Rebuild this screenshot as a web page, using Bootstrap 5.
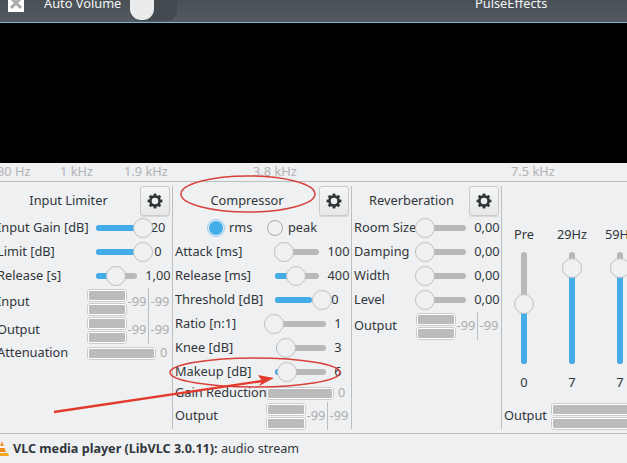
<!DOCTYPE html>
<html lang="en">
<head>
<meta charset="utf-8">
<title>PulseEffects</title>
<link href="https://cdn.jsdelivr.net/npm/bootstrap@5.3.0/dist/css/bootstrap.min.css" rel="stylesheet">
<style>
html,body{margin:0;background:#000}
body{font-family:"Noto Sans","Open Sans",sans-serif;font-size:12.8px;line-height:1.2;color:#31363b}
.app-shell{width:627px;height:463px;position:relative;overflow:hidden;background:#eff0f1}
.top-strip{height:23px;background:linear-gradient(#4a5156,#535b60);border-bottom:1px solid #6fb4d2;color:#f2f4f5;overflow:hidden;flex:none}
.close-box{width:16px;height:18px;margin-left:8px;margin-top:-6px;background:#fff;flex:none}
.auto-lbl{margin-left:20px;margin-top:-4px;width:86px;white-space:nowrap;flex:none}
.sw-track{width:47px;height:21px;margin-top:0;background:#42494f;border-radius:0 0 10px 10px;position:relative;flex:none}
.sw-knob{position:absolute;left:0;top:0;width:24px;height:20px;background:#e9ebed;border-radius:0 0 11px 11px}
.app-name{margin-left:298px;margin-top:-4px;white-space:nowrap}
.video-area{height:140px;background:#000;flex:none}
.freq-strip{height:19px;border-bottom:1px solid #bcbebf;color:#b1b3b5;flex:none;white-space:nowrap}
.fq{flex:none}
.fq1{margin-left:-3px;width:63px}
.fq2{width:64px}
.fq3{width:129px}
.fq4{width:258px}
.panels{height:251px;flex:none}
.pnl{margin-top:4px;height:243px;border-right:1px solid #bcbebf;flex:none}
.pnl-a{width:176px;margin-left:-3px}
.pnl-b{width:179px;padding-left:2px}
.pnl-c{width:150px;padding-left:2px}
.pnl-d{width:126px;flex:none}
.ttl-row{height:30px}
.ttl{flex:1 1 auto;text-align:center}
.gear{width:30px;height:30px;margin-right:2px;padding:0;border:1px solid #c8cacc;border-radius:3px;background:linear-gradient(#f4f5f5,#e6e7e8);box-shadow:0 1px 0 #d8d9da;display:flex;align-items:center;justify-content:center;flex:none}
.rw{height:24px;white-space:nowrap}
.lb{flex:none}
.lb-a{width:99px}
.lb-m{width:90px}
.lb-b{width:100px}
.lb-r{width:90px}
.lb-k{width:101px}
.lb-g{width:91px}
.lb-c{width:62px}
.lb-o{width:62px}
.sldr{position:relative;height:6px;border-radius:3px;background:#b9b9b9;flex:none}
.tr-41{width:41px}
.tr-44{width:44px}
.tr-37{width:37px}
.tr-61{width:61px}
.tr-50{width:50px}
.tr-51{width:51px}
.fill-part{position:absolute;left:0;top:0;bottom:0;width:min(var(--p),100%);background:#44ace6;border-radius:3px}
.knob{position:absolute;left:var(--p);top:50%;width:20px;height:20px;margin:-10px 0 0 -10px;border-radius:50%;background:#eff0f1;border:1px solid #bdbfc0}
.val{flex:1 1 auto;text-align:center;padding-left:7px}
.val-n{padding-left:0;padding-right:1px}
.radio-row{height:24px;padding-left:33px}
.radio-row .form-check-input{width:16px;height:16px;margin:0;border:1px solid #a8aaab;background-color:#eff0f1;background-image:none;box-shadow:none;float:none;flex:none}
.radio-row .form-check-input:checked{background-color:#44ace6;border-color:#eff0f1;box-shadow:0 0 0 1px #9ccfee}
.radio-row label{margin-left:5px;width:38px}
.mtr-row{height:28px;white-space:nowrap}
.mtr-stack{width:40px;flex:none;display:flex;flex-direction:column;gap:1px}
.lvl{height:13px;border:2px solid #fff;outline:1px solid #c9cbcc;outline-offset:-1px;border-radius:3px;background:#bbb;background-clip:padding-box}
.mtr-num{color:#acaeb0;flex:none;width:20px;text-align:center}
.mtr-sep{border-left:1px solid #bcbebf;height:100%;flex:none;margin:0 1px}
.lvl-wide{width:69px;flex:none}
.gr-bar{width:68px;flex:none}
.dim{color:#acaeb0;margin-left:4px}
.rw-att{height:16px;margin-top:1px}
.rw-gr{height:18px;white-space:nowrap}
.rw-out{height:28px;white-space:nowrap}
.chs{margin-left:-2px;padding-top:43px}
.ch{width:48px;flex:none;text-align:center}
.ch-name{height:27px;line-height:18px}
.vtrack{width:6px;height:112px;border-radius:3px;background:#b9b9b9;position:relative;margin:0 auto}
.vfill{position:absolute;left:0;right:0;bottom:0;top:var(--t);background:#44ace6;border-radius:3px}
.vknob{position:absolute;left:50%;top:var(--t);width:20px;height:20px;margin:-10px 0 0 -10px;border-radius:50%;background:#eff0f1;border:1px solid #bdbfc0}
.ch-val{margin-top:11px;height:18px}
.out-row{margin-top:9px;margin-left:2px;height:28px}
.out-lb{width:47px;flex:none}
.mtr-stack.wide-stack{width:90px}
.status-strip{height:30px;padding-top:1px;border-top:1px solid #bcbebf;flex:none;white-space:nowrap;font-size:12.6px}
.cone{flex:none;margin-left:-5px;margin-right:4px}
.anno{position:absolute;left:0;top:0;pointer-events:none}
</style>
</head>
<body>
<svg width="0" height="0" class="position-absolute">
<defs>
<g id="cog">
<circle cx="8" cy="8" r="4.6" fill="none" stroke="#2f3437" stroke-width="2.6"/>
<g fill="#2f3437">
<rect x="6.6" y="0.6" width="2.8" height="3"/>
<rect x="6.6" y="12.4" width="2.8" height="3"/>
<rect x="0.6" y="6.6" width="3" height="2.8"/>
<rect x="12.4" y="6.6" width="3" height="2.8"/>
<rect x="6.6" y="0.6" width="2.8" height="3" transform="rotate(45 8 8)"/>
<rect x="6.6" y="12.4" width="2.8" height="3" transform="rotate(45 8 8)"/>
<rect x="0.6" y="6.6" width="3" height="2.8" transform="rotate(45 8 8)"/>
<rect x="12.4" y="6.6" width="3" height="2.8" transform="rotate(45 8 8)"/>
</g>
</g>
</defs>
</svg>
<div class="app-shell d-flex flex-column">
  <div class="top-strip d-flex align-items-start">
    <div class="close-box d-flex align-items-center justify-content-center">
      <svg width="14" height="14" viewBox="0 0 14 14"><path d="M2 2 12 12M12 2 2 12" stroke="#a9abac" stroke-width="3"/></svg>
    </div>
    <div class="auto-lbl">Auto Volume</div>
    <div class="sw-track"><div class="sw-knob"></div></div>
    <div class="app-name">PulseEffects</div>
  </div>
  <div class="video-area"></div>
  <div class="freq-strip d-flex align-items-center">
    <span class="fq fq1">30 Hz</span><span class="fq fq2">1 kHz</span><span class="fq fq3">1.9 kHz</span><span class="fq fq4">3.8 kHz</span><span class="fq">7.5 kHz</span>
  </div>
  <div class="panels d-flex">
    <section class="pnl pnl-a">
      <div class="ttl-row d-flex align-items-center"><div class="ttl">Input Limiter</div><button class="gear" type="button" aria-label="Settings"><svg width="16" height="16" viewBox="0 0 16 16"><use href="#cog"/></svg></button></div>
      <div class="rw d-flex align-items-center"><div class="lb lb-a">Input Gain [dB]</div><div class="sldr tr-41" style="--p:115%"><div class="fill-part"></div><div class="knob"></div></div><div class="val">20</div></div>
      <div class="rw d-flex align-items-center"><div class="lb lb-a">Limit [dB]</div><div class="sldr tr-41" style="--p:115%"><div class="fill-part"></div><div class="knob"></div></div><div class="val">0</div></div>
      <div class="rw d-flex align-items-center"><div class="lb lb-a">Release [s]</div><div class="sldr tr-41" style="--p:49%"><div class="fill-part"></div><div class="knob"></div></div><div class="val">1,00</div></div>
      <div class="mtr-row d-flex align-items-center"><div class="lb lb-m">Input</div><div class="mtr-stack"><div class="lvl"></div><div class="lvl"></div></div><div class="mtr-num">-99</div><div class="mtr-sep"></div><div class="mtr-num">-99</div></div>
      <div class="mtr-row d-flex align-items-center"><div class="lb lb-m">Output</div><div class="mtr-stack"><div class="lvl"></div><div class="lvl"></div></div><div class="mtr-num">-99</div><div class="mtr-sep"></div><div class="mtr-num">-99</div></div>
      <div class="rw-att d-flex align-items-center"><div class="lb lb-m">Attenuation</div><div class="lvl lvl-wide"></div><div class="dim">0</div></div>
    </section>
    <section class="pnl pnl-b">
      <div class="ttl-row d-flex align-items-center"><div class="ttl">Compressor</div><button class="gear" type="button" aria-label="Settings"><svg width="16" height="16" viewBox="0 0 16 16"><use href="#cog"/></svg></button></div>
      <div class="radio-row d-flex align-items-center">
        <input class="form-check-input" type="radio" name="mode" id="rms" checked><label for="rms">rms</label>
        <input class="form-check-input" type="radio" name="mode" id="peak"><label for="peak">peak</label>
      </div>
      <div class="rw d-flex align-items-center"><div class="lb lb-b">Attack [ms]</div><div class="sldr tr-44" style="--p:20%"><div class="knob"></div></div><div class="val">100</div></div>
      <div class="rw d-flex align-items-center"><div class="lb lb-b">Release [ms]</div><div class="sldr tr-44" style="--p:48%"><div class="fill-part"></div><div class="knob"></div></div><div class="val">400</div></div>
      <div class="rw d-flex align-items-center"><div class="lb lb-b">Threshold [dB]</div><div class="sldr tr-37" style="--p:127%"><div class="fill-part"></div><div class="knob"></div></div><div class="val">0</div></div>
      <div class="rw d-flex align-items-center"><div class="lb lb-r">Ratio [n:1]</div><div class="sldr tr-61" style="--p:15%"><div class="knob"></div></div><div class="val val-n">1</div></div>
      <div class="rw d-flex align-items-center"><div class="lb lb-k">Knee [dB]</div><div class="sldr tr-50" style="--p:20%"><div class="fill-part"></div><div class="knob"></div></div><div class="val val-n">3</div></div>
      <div class="rw d-flex align-items-center"><div class="lb lb-b">Makeup [dB]</div><div class="sldr tr-51" style="--p:23%"><div class="fill-part"></div><div class="knob"></div></div><div class="val val-n">6</div></div>
      <div class="rw-gr d-flex align-items-center"><div class="lb lb-g">Gain Reduction</div><div class="lvl gr-bar"></div><div class="dim">0</div></div>
      <div class="rw-out d-flex align-items-center"><div class="lb lb-g">Output</div><div class="mtr-stack"><div class="lvl"></div><div class="lvl"></div></div><div class="mtr-num">-99</div><div class="mtr-sep"></div><div class="mtr-num">-99</div></div>
    </section>
    <section class="pnl pnl-c">
      <div class="ttl-row d-flex align-items-center"><div class="ttl">Reverberation</div><button class="gear" type="button" aria-label="Settings"><svg width="16" height="16" viewBox="0 0 16 16"><use href="#cog"/></svg></button></div>
      <div class="rw d-flex align-items-center"><div class="lb lb-c">Room Size</div><div class="sldr tr-50" style="--p:18%"><div class="knob"></div></div><div class="val">0,00</div></div>
      <div class="rw d-flex align-items-center"><div class="lb lb-c">Damping</div><div class="sldr tr-50" style="--p:18%"><div class="knob"></div></div><div class="val">0,00</div></div>
      <div class="rw d-flex align-items-center"><div class="lb lb-c">Width</div><div class="sldr tr-50" style="--p:18%"><div class="knob"></div></div><div class="val">0,00</div></div>
      <div class="rw d-flex align-items-center"><div class="lb lb-c">Level</div><div class="sldr tr-50" style="--p:18%"><div class="knob"></div></div><div class="val">0,00</div></div>
      <div class="rw-out d-flex align-items-center"><div class="lb lb-o">Output</div><div class="mtr-stack"><div class="lvl"></div><div class="lvl"></div></div><div class="mtr-num">-99</div><div class="mtr-sep"></div><div class="mtr-num">-99</div></div>
    </section>
    <section class="pnl-d">
      <div class="chs d-flex">
        <div class="ch"><div class="ch-name">Pre</div><div class="vtrack" style="--t:46%"><div class="vfill"></div><div class="vknob"></div></div><div class="ch-val">0</div></div>
        <div class="ch"><div class="ch-name">29Hz</div><div class="vtrack" style="--t:14%"><div class="vfill"></div><div class="vknob"></div></div><div class="ch-val">7</div></div>
        <div class="ch"><div class="ch-name">59Hz</div><div class="vtrack" style="--t:14%"><div class="vfill"></div><div class="vknob"></div></div><div class="ch-val">7</div></div>
      </div>
      <div class="out-row d-flex align-items-center"><div class="out-lb">Output</div><div class="mtr-stack wide-stack"><div class="lvl"></div><div class="lvl"></div></div></div>
    </section>
  </div>
  <div class="status-strip d-flex align-items-center">
    <svg class="cone" width="14" height="16" viewBox="0 0 14 16"><path d="M7 0 11 11H3Z" fill="#f28a1c"/><path d="M1 12h12l1 3H0Z" fill="#f5a623"/><path d="M5 5h4l.7 2H4.300Z" fill="#fff"/></svg>
    <span><b>VLC media player (LibVLC 3.0.11):</b> audio stream</span>
  </div>
  <svg class="anno" width="627" height="463" viewBox="0 0 627 463">
    <ellipse cx="248" cy="194" rx="67" ry="18" fill="none" stroke="#d8403a" stroke-width="1.5"/>
    <ellipse cx="255" cy="372.500" rx="85" ry="14.500" fill="none" stroke="#d8403a" stroke-width="1.5"/>
    <path d="M54 412 262 381" stroke="#e23b2e" stroke-width="2.400"/>
    <path d="M274 378 258 375 262 381 259 386Z" fill="#e23b2e"/>
  </svg>
</div>
</body>
</html>
